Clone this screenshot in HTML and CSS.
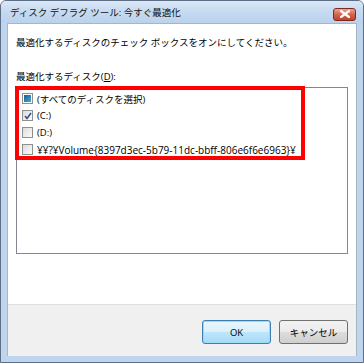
FILE: index.html
```html
<!DOCTYPE html>
<html lang="ja">
<head>
    <meta charset="UTF-8">
    <title>ディスク デフラグ ツール: 今すぐ最適化</title>
    <link rel="stylesheet" href="styles.css">
</head>
<body>
    <div class="window">
        <div class="titlebar">
            <span class="title">ディスク デフラグ ツール: 今すぐ最適化</span>
            <button class="close" aria-label="閉じる">
                <svg width="10" height="8" viewBox="0 0 10 8">
                    <path d="M1 1 L9 7 M9 1 L1 7" stroke="#fff" stroke-width="2.2" stroke-linecap="square"/>
                </svg>
            </button>
        </div>

        <div class="client">
            <div class="content">
                <p class="intro">最適化するディスクのチェック ボックスをオンにしてください。</p>
                <p class="label">最適化するディスク(<u>D</u>):</p>

                <div class="listbox">
                    <div class="highlight"></div>
                    <div class="item">
                        <span class="check mixed"></span>
                        <span>(すべてのディスクを選択)</span>
                    </div>
                    <div class="item">
                        <span class="check">
                            <svg width="8" height="8" viewBox="0 0 8 8">
                                <path d="M1 4 L3 6.5 L7 1" fill="none" stroke="#3a4f8c" stroke-width="1.6"/>
                            </svg>
                        </span>
                        <span>(C:)</span>
                    </div>
                    <div class="item">
                        <span class="check"></span>
                        <span>(D:)</span>
                    </div>
                    <div class="item">
                        <span class="check"></span>
                        <span class="volume">¥¥?¥Volume{8397d3ec-5b79-11dc-bbff-806e6f6e6963}¥</span>
                    </div>
                </div>
            </div>

            <div class="footer">
                <button class="btn default">OK</button>
                <button class="btn">キャンセル</button>
            </div>
        </div>
    </div>
</body>
</html>
```

FILE: styles.css
```css
body {
    margin: 0;
    background: #fff;
    font-family: "Open Sans", "Noto Sans CJK JP", sans-serif;
    font-size: 9.5px;
    color: #000;
}
.window {
    width: 362px;
    height: 361px;
    border: 1px solid #5d6f86;
    border-radius: 6px 6px 0 0;
    background: #bfd5ee;
    display: flex;
    flex-direction: column;
}
.titlebar {
    height: 22px;
    display: flex;
    align-items: center;
    justify-content: space-between;
    padding: 0 7px 0 9px;
    border-radius: 5px 5px 0 0;
    background: linear-gradient(#dae7f6, #c5daf0 50%, #bad2ec);
}
.title {
    color: #111;
}
.close {
    width: 23px;
    height: 13px;
    margin-top: 4px;
    padding: 0;
    border: 1px solid #7d2a1c;
    border-radius: 3px;
    background: linear-gradient(#e9a592, #d5644e 50%, #c0422b);
    display: flex;
    align-items: center;
    justify-content: center;
}
.client {
    flex: 1;
    margin: 0 6px 6px;
    background: #fff;
    display: flex;
    flex-direction: column;
    border: 1px solid #a4b6ca;
    border-bottom: none;
}
.content {
    flex: 1;
    padding: 12px 8px 0;
}
.intro {
    margin: 0;
    line-height: 14px;
}
.label {
    margin: 20px 0 3px;
    line-height: 14px;
}
.listbox {
    position: relative;
    height: 163px;
    border: 1px solid #828790;
    padding-top: 2px;
}
.highlight {
    position: absolute;
    left: -2px;
    top: -2px;
    width: 282px;
    height: 66px;
    border: 4px solid #ff0000;
}
.item {
    height: 17px;
    display: flex;
    align-items: center;
    padding-left: 5px;
    gap: 4px;
    white-space: nowrap;
}
.volume {
    font-size: 10px;
}
.check {
    width: 9px;
    height: 9px;
    border: 1px solid #8e8f8f;
    background: linear-gradient(135deg, #dcdcdc, #fbfbfb);
    display: flex;
    align-items: center;
    justify-content: center;
    flex: none;
}
.check.mixed {
    background: #fff;
}
.check.mixed::after {
    content: "";
    width: 7px;
    height: 7px;
    background: linear-gradient(135deg, #1b5f8e, #4aa3d8);
}
.footer {
    height: 52px;
    border-top: 1px solid #dfdfdf;
    background: #f0f0f0;
    display: flex;
    justify-content: flex-end;
    align-items: flex-start;
    gap: 8px;
    padding: 15px 8px 0 0;
    box-sizing: border-box;
}
.btn {
    width: 69px;
    height: 24px;
    border: 1px solid #707070;
    border-radius: 3px;
    background: linear-gradient(#f2f2f2, #ebebeb 50%, #dddddd 51%, #cfcfcf);
    font-family: "Open Sans", "Noto Sans CJK JP", sans-serif;
    font-size: 9.5px;
    color: #000;
    padding: 0;
}
.btn.default {
    border-color: #3c7fb1;
    background: linear-gradient(#eaf6fd, #d9f0fc 50%, #bee6fd 51%, #a7d9f5);
    box-shadow: inset 0 0 0 1px #97dcf7;
}
```
